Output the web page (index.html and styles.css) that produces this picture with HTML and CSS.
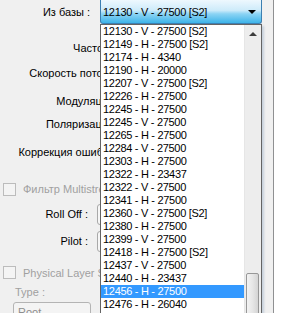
FILE: index.html
```html
<!DOCTYPE html>
<html lang="ru">
<head>
  <meta charset="UTF-8">
  <meta name="viewport" content="width=device-width, initial-scale=1.0">
  <title>Настройки транспондера</title>
  <link rel="stylesheet" href="styles.css">
</head>
<body>
  <div class="panel">
    <div class="form">
      <div class="row row-base">
        <span class="lbl lbl-base">Из базы :</span>
        <div class="combo combo-focus">12130 - V - 27500 [S2]<span class="arrow"></span></div>
      </div>
      <div class="row mt-14">
        <span class="lbl lbl-wide">Частота :</span>
        <div class="combo combo-hidden"></div>
      </div>
      <div class="row mt-5">
        <span class="lbl lbl-wide">Скорость потока :</span>
        <div class="combo combo-hidden"></div>
      </div>
      <div class="row mt-8">
        <span class="lbl lbl-wide">Модуляция :</span>
        <div class="combo combo-hidden"></div>
      </div>
      <div class="row mt-3">
        <span class="lbl lbl-wide">Поляризация :</span>
        <div class="combo combo-hidden"></div>
      </div>
      <div class="row mt-8">
        <span class="lbl lbl-wide">Коррекция ошибок :</span>
        <div class="combo combo-hidden"></div>
      </div>
      <div class="row check-row mt-17">
        <span class="check"></span>
        <span class="check-text">Фильтр Multistream</span>
      </div>
      <div class="row mt-5">
        <span class="lbl lbl-short">Roll Off :</span>
        <div class="combo combo-plain"></div>
      </div>
      <div class="row mt-7">
        <span class="lbl lbl-short">Pilot :</span>
        <div class="combo combo-plain"></div>
      </div>
      <div class="row check-row row-tight mt-12">
        <span class="check"></span>
        <span class="check-text">Physical Layer Scrambling</span>
      </div>
      <div class="row">
        <span class="type-lbl">Type :</span>
      </div>
      <div class="combo combo-root">Root<span class="arrow arrow-gray"></span></div>
    </div>

    <div class="dropdown">
      <ul class="items">
        <li>12130 - V - 27500 [S2]</li>
        <li>12149 - H - 27500 [S2]</li>
        <li>12174 - H - 4340</li>
        <li>12190 - H - 20000</li>
        <li>12207 - V - 27500 [S2]</li>
        <li>12226 - H - 27500</li>
        <li>12245 - H - 27500</li>
        <li>12245 - V - 27500</li>
        <li>12265 - H - 27500</li>
        <li>12284 - V - 27500</li>
        <li>12303 - H - 27500</li>
        <li>12322 - H - 23437</li>
        <li>12322 - V - 27500</li>
        <li>12341 - H - 27500</li>
        <li>12360 - V - 27500 [S2]</li>
        <li>12380 - H - 27500</li>
        <li>12399 - V - 27500</li>
        <li>12418 - H - 27500 [S2]</li>
        <li>12437 - V - 27500</li>
        <li>12440 - H - 23437</li>
        <li class="selected">12456 - H - 27500</li>
        <li>12476 - H - 26040</li>
      </ul>
      <div class="scrollbar">
        <div class="scroll-up"><span class="up-arrow"></span></div>
        <div class="thumb"></div>
      </div>
    </div>
  </div>
</body>
</html>
```

FILE: styles.css
```css
* { margin: 0; padding: 0; box-sizing: border-box; }
html, body { overflow: hidden; }
body {
  background: white;
  font-family: "Liberation Sans", Arial, sans-serif;
  font-size: 11px;
  color: black;
}

.panel {
  position: relative;
  width: 274px;
  height: 313px;
  overflow: hidden;
  background: #f0f0f0;
  border-right: 1px solid #8f9092;
}

.form { display: flex; flex-direction: column; }

.row {
  display: flex;
  align-items: center;
  height: 20px;
  white-space: nowrap;
}
.row-base { height: 24px; }
.row-tight { height: 19px; }

.mt-3 { margin-top: 3px; }
.mt-5 { margin-top: 5px; }
.mt-7 { margin-top: 7px; }
.mt-8 { margin-top: 8px; }
.mt-12 { margin-top: 12px; }
.mt-14 { margin-top: 14px; }
.mt-17 { margin-top: 17px; }

.lbl { text-align: right; flex: none; }
.lbl-base { width: 90px; margin-right: 10px; }
.lbl-wide { width: 120px; margin-right: 10px; }
.lbl-short { width: 88px; margin-right: 9px; }

.combo {
  position: relative;
  height: 21px;
  border: 1px solid #acacac;
  border-radius: 3px;
  background: linear-gradient(#f2f2f2, #ebebeb 50%, #dddddd 51%, #cfcfcf);
  line-height: 19px;
  padding-left: 2px;
}
.combo-focus {
  width: 162px;
  height: 24px;
  line-height: 24px;
  border-color: #3c7fb1;
  border-radius: 0 0 3px 3px;
  border-top: none;
  background: linear-gradient(#eef8fe, #cdebfa 45%, #8dd4f4 60%, #3db4e9);
  letter-spacing: -0.3px;
}
.combo-hidden { width: 125px; }
.combo-plain { width: 140px; background: #f6f6f6; border-color: #a9a9a9; }
.combo-root {
  width: 78px;
  height: 22px;
  margin-left: 13px;
  padding-left: 4px;
  color: #8d8d8d;
  background: #f4f4f4;
  border-color: #b4b4b4;
}

.arrow {
  position: absolute;
  right: 5px;
  top: 10px;
  border-left: 4px solid transparent;
  border-right: 4px solid transparent;
  border-top: 4px solid black;
}
.arrow-gray { border-top-color: #9a9a9a; right: 8px; }

.check-row { padding-left: 3px; }
.check {
  width: 13px;
  height: 13px;
  border: 1px solid #bcbcbc;
  background: #f4f4f4;
  margin-right: 7px;
}
.check-text { color: #a0a0a0; }

.type-lbl { margin-left: 15px; color: #a0a0a0; }

/* открытый список выбора */
.dropdown {
  position: absolute;
  left: 100px;
  top: 24px;
  width: 162px;
  height: 300px;
  display: flex;
  border: 1px solid #646464;
  background: white;
  box-shadow: 2px 2px 2px rgba(120, 150, 180, 0.35);
}

.items {
  list-style: none;
  width: 143px;
  flex: none;
  overflow: hidden;
  letter-spacing: -0.3px;
}
.items li {
  height: 13px;
  line-height: 13px;
  padding-left: 2px;
  white-space: nowrap;
}
.items li.selected { background: #3399ff; color: white; }

.scrollbar {
  flex: 1;
  display: flex;
  flex-direction: column;
  background: #ededed;
  border-left: 1px solid #e6e6e6;
}
.scroll-up {
  height: 17px;
  display: flex;
  align-items: center;
  justify-content: center;
}
.up-arrow {
  border-left: 4px solid transparent;
  border-right: 4px solid transparent;
  border-bottom: 4px solid #3c3c3c;
}
.thumb {
  margin-top: auto;
  margin-left: 1px;
  width: 13px;
  height: 50px;
  border: 1px solid #979797;
  border-radius: 2px;
  background: linear-gradient(to right, #f3f3f3, #e6e6e6 50%, #d4d4d4);
}
```
